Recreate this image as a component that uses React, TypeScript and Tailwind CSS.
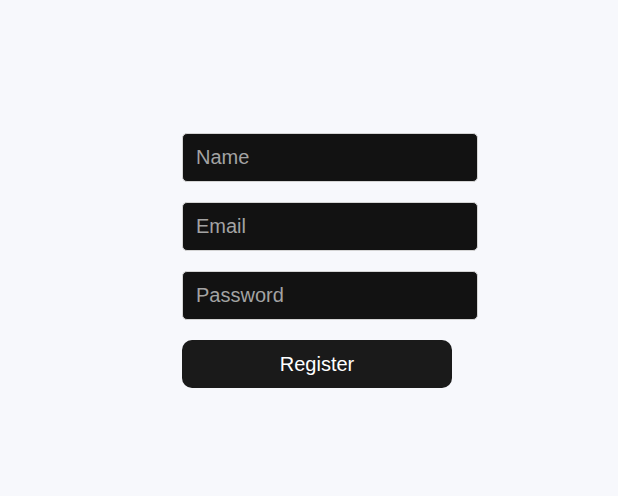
import { useState } from "react";

const inputClass =
  "h-[49px] w-[296px] rounded-[5px] border border-[#d4d4d4] bg-[#121212] px-[13px] text-[20px] text-white placeholder:text-[#a3a3a3] outline-none";

export default function App() {
  const [form, setForm] = useState({ name: "", email: "", password: "" });

  return (
    <div
      className="min-h-[496px] w-full bg-[#f7f8fc] pl-[182px] pt-[133px]"
      style={{ fontFamily: '"Liberation Sans", Arial, sans-serif' }}
    >
      <form className="flex flex-col items-start gap-[20px]" onSubmit={(e) => e.preventDefault()}>
        <input
          className={inputClass}
          placeholder="Name"
          value={form.name}
          onChange={(e) => setForm({ ...form, name: e.target.value })}
        />
        <input
          className={inputClass}
          placeholder="Email"
          type="email"
          value={form.email}
          onChange={(e) => setForm({ ...form, email: e.target.value })}
        />
        <input
          className={inputClass}
          placeholder="Password"
          type="password"
          value={form.password}
          onChange={(e) => setForm({ ...form, password: e.target.value })}
        />
        <button
          type="submit"
          className="h-[48px] w-[270px] rounded-[10px] bg-[#1a1a1a] text-[20px] text-white"
        >
          Register
        </button>
      </form>
    </div>
  );
}
